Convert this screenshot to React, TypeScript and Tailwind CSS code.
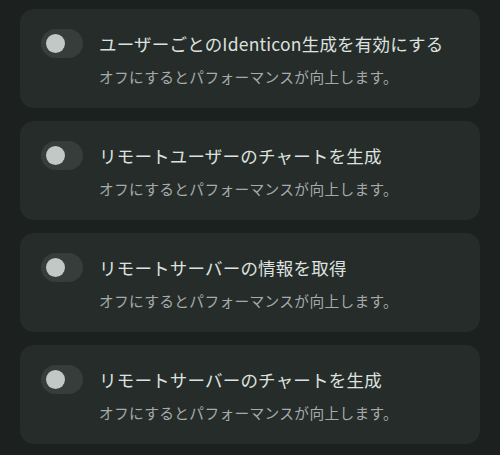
import React from "react";

const items = [
  "ユーザーごとのIdenticon生成を有効にする",
  "リモートユーザーのチャートを生成",
  "リモートサーバーの情報を取得",
  "リモートサーバーのチャートを生成",
];

function Toggle() {
  return (
    <div className="relative h-[29px] w-[42px] shrink-0 rounded-full bg-[#363d3b]">
      <div className="absolute left-[5px] top-[5px] h-[19px] w-[19px] rounded-full bg-[#c3c7c5]" />
    </div>
  );
}

export default function App() {
  return (
    <div
      className="min-h-[455px] w-[500px] bg-[#1c201f] px-[20px] pt-[9px]"
      style={{ fontFamily: '"Noto Sans CJK JP", "Noto Sans", sans-serif' }}
    >
      <div className="flex flex-col gap-[13px]">
        {items.map((t) => (
          <div
            key={t}
            className="flex h-[99px] items-start gap-[16px] rounded-[14px] bg-[#262c2a] pl-[21px] pt-[20px]"
          >
            <Toggle />
            <div className="flex flex-col">
              <div className="text-[17.5px] leading-[30px] tracking-[0.2px] text-[#dde1df]">{t}</div>
              <div className="mt-[8px] text-[14.7px] leading-[20px] tracking-[0.35px] text-[#a6abaa]">
                オフにするとパフォーマンスが向上します。
              </div>
            </div>
          </div>
        ))}
      </div>
    </div>
  );
}
